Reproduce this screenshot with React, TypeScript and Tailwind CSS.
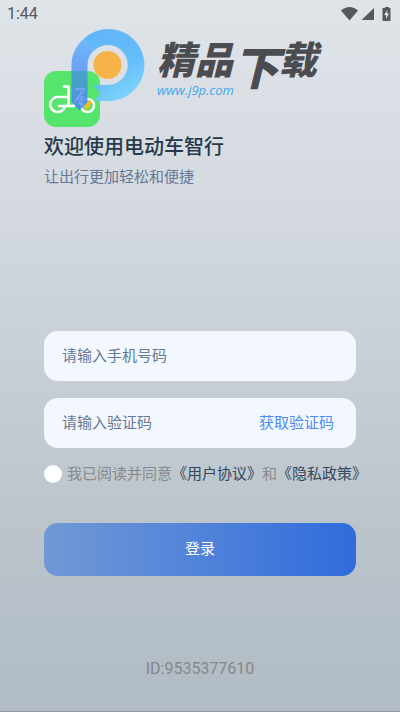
import React from 'react';

const StatusBar: React.FC = () => {
  return (
    <header className="flex h-7 items-center justify-between pl-[7px] pr-2 text-[#55585c]">
      <span className="font-['Roboto',sans-serif] text-[16px] leading-5">1:44</span>
      <svg width="52" height="16" viewBox="0 0 52 16" fill="currentColor" aria-hidden="true">
        <path d="M1 4.5C6-.2 13-.2 18 4.500L9.500 14.500Z" />
        <path d="M34 2v12H21.500Z" />
        <path fillRule="evenodd" d="M43 2h2V1h4v1h1.500v13H42.500V2ZM47.500 4l-3.500 5H46v4l3-5.500h-2Z" />
      </svg>
    </header>
  );
};

const AppIcon: React.FC = () => {
  return (
    <div className="flex h-14 w-14 items-center justify-center rounded-xl bg-[#55e56c]">
      <svg width="56" height="56" viewBox="0 0 56 56" fill="none" stroke="#fff" strokeWidth="2.500" strokeLinecap="round" strokeLinejoin="round" aria-hidden="true">
        <path d="M24 26h-10a7.500 7.500 0 1 0 7 9.500" />
        <path d="M20 15.500h4.500V35M15 35h15c1-6 4-8 8-9" />
        <circle cx="43.500" cy="34.500" r="6.500" />
        <path d="M46 30l-5 5h2l-2 4 5-4h-2l3-4z" fill="#f8bd22" stroke="#f8bd22" strokeWidth="1.500" />
      </svg>
    </div>
  );
};

const Watermark: React.FC = () => {
  return (
    <div className="pointer-events-none absolute left-[71px] top-[28px] flex">
      <svg width="74" height="84" viewBox="0 0 74 84" aria-hidden="true">
        <defs>
          <linearGradient id="stem" x1="0" y1="0" x2="0" y2="1">
            <stop offset="0" stopColor="#58b1fb" />
            <stop offset=".4" stopColor="#5a97f8" />
            <stop offset="1" stopColor="#3f83f0" />
          </linearGradient>
          <linearGradient id="ring" x1=".2" y1="0" x2=".7" y2="1">
            <stop offset="0" stopColor="#58b1fb" />
            <stop offset=".6" stopColor="#5cbbfa" />
            <stop offset="1" stopColor="#78d6fc" />
          </linearGradient>
        </defs>
        <path fill="url(#ring)" fillOpacity=".93" d="M12 11.500A36 36 0 1 1 36.500 73H23l6-8-7-8h14.500a20 20 0 1 0-14-34Z" />
        <path fill="url(#stem)" fillOpacity=".85" d="M.5 37c0-10 4.500-19 11.500-25.500L22.500 23c-4 3.500-6 8.500-6 14v37l-8 8.500-8-8.500Z" />
        <path fill="#3f9fb8" fillOpacity=".5" d="M.5 43h16v18H.5Z" />
        <path fill="none" stroke="#86a6fa" strokeOpacity=".7" strokeWidth="2" d="M4 61h9L5 72M12 68l-4 7 5 2" />
        <circle cx="36.500" cy="37" r="14" fill="#f7b348" />
      </svg>
      <div className="ml-3 mt-2.5">
        <p className="flex h-10 items-start font-['Noto_Sans_CJK_SC',sans-serif] text-[38px] font-black italic leading-10 text-[#4b4c50]">
          精品<span className="text-[46px] leading-[54px]">下</span>载
        </p>
        <p className="mt-1 font-['Open_Sans',sans-serif] text-[13px] italic leading-4 text-[#40aaea]">www.j9p.com</p>
      </div>
    </div>
  );
};

const App: React.FC = () => {
  return (
    <div className="relative flex min-h-screen flex-col border-b border-[#969a9f] bg-[linear-gradient(to_bottom,#dfe4e9,#d5dae1_28%,#c9d0d7_48%,#c3cad2_60%,#bbc4cb_75%,#b0bbc5)] font-['Roboto','Noto_Sans_CJK_SC',sans-serif] text-[15px]">
      <StatusBar />
      <main className="flex flex-1 flex-col px-11 pt-[43px]">
        <AppIcon />
        <h1 className="mt-1 text-[20px] font-medium leading-8 text-[#26394b]">欢迎使用电动车智行</h1>
        <p className="mt-0.5 leading-6 text-[#657895]">让出行更加轻松和便捷</p>

        <form className="mt-[142px]" onSubmit={(e) => e.preventDefault()}>
          <input
            type="tel"
            aria-label="手机号码"
            placeholder="请输入手机号码"
            className="block h-[50px] w-full rounded-[14px] bg-[#f3f8ff] px-[18px] outline-none placeholder:text-[#657895]"
          />
          <div className="mt-[17px] flex h-[50px] items-center rounded-[14px] bg-[#f3f8ff] pl-[18px] pr-[22px]">
            <input
              type="text"
              aria-label="验证码"
              placeholder="请输入验证码"
              className="min-w-0 flex-1 outline-none placeholder:text-[#657895]"
            />
            <button type="button" className="text-[#4c8bf5]">获取验证码</button>
          </div>
          <div className="mt-[14px] flex h-6 items-center gap-[5px] whitespace-nowrap text-[#87898b]">
            <input id="agree" type="checkbox" className="h-[18px] w-[18px] shrink-0 appearance-none rounded-full bg-white checked:bg-[#3470dc]" />
            <div>
              <label htmlFor="agree">我已阅读并同意</label>
              <a href="#terms" className="text-[#34475b]">《用户协议》</a>
              和
              <a href="#privacy" className="text-[#34475b]">《隐私政策》</a>
            </div>
          </div>
          <button type="submit" className="mt-[37px] h-[53px] w-full rounded-[14px] bg-linear-to-r from-[#7098d5] to-[#306bdc] text-white">
            登录
          </button>
        </form>

        <p className="mt-auto pb-8 text-center text-[16px] leading-5 text-[#858789]">ID:9535377610</p>
      </main>
      <Watermark />
    </div>
  );
};

export default App;
